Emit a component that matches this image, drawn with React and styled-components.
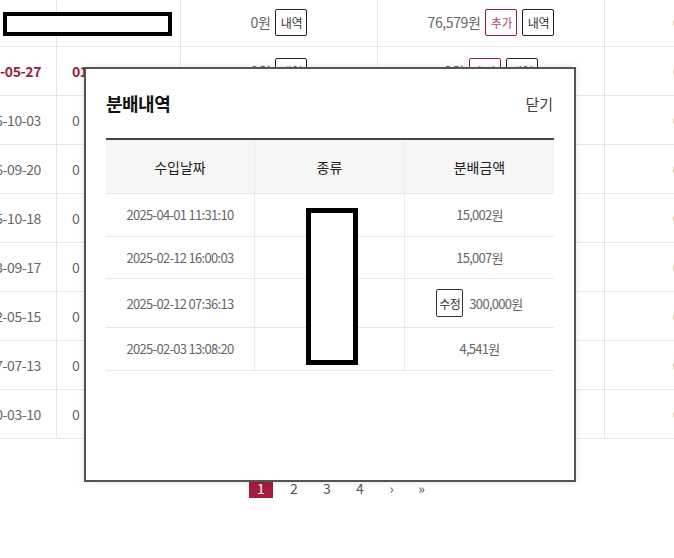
import React from "react";
import styled, { createGlobalStyle } from "styled-components";

const GlobalStyle = createGlobalStyle`
  body {
    margin: 0;
    background: #fff;
    font-family: "Noto Sans CJK KR", "Noto Sans", sans-serif;
  }
`;

const bgRows = [
  { date: "2021-05-27", second: "01", red: true },
  { date: "2015-10-03", second: "0" },
  { date: "2016-09-20", second: "0" },
  { date: "2015-10-18", second: "0" },
  { date: "2013-09-17", second: "0" },
  { date: "2012-05-15", second: "0" },
  { date: "2017-07-13", second: "0" },
  { date: "2020-03-10", second: "0" },
];

const history = [
  { date: "2025-04-01 11:31:10", amount: "15,002원" },
  { date: "2025-02-12 16:00:03", amount: "15,007원" },
  { date: "2025-02-12 07:36:13", amount: "300,000원", edit: true },
  { date: "2025-02-03 13:08:20", amount: "4,541원" },
];

const Page = styled.div`
  position: relative;
  width: 674px;
  height: 558px;
  overflow: hidden;
`;

const BgTable = styled.div`
  margin-left: -44px;
  margin-top: -2px;
  width: 760px;
`;

const BgRow = styled.div`
  display: grid;
  grid-template-columns: 101px 124px 197px 227px 111px;
  height: 49px;
  border-bottom: 1px solid #e6e6e6;
  box-sizing: border-box;
`;

const BgCell = styled.div`
  display: flex;
  align-items: center;
  justify-content: ${(p) => p.$align || "center"};
  gap: 5px;
  padding: ${(p) => p.$pad || "0"};
  border-right: 1px solid #e6e6e6;
  font-size: 14px;
  letter-spacing: -0.4px;
  color: ${(p) => (p.$red ? "#9b1d3d" : "#666")};
  font-weight: ${(p) => (p.$red ? 700 : 400)};
  white-space: nowrap;
  overflow: hidden;
  position: relative;
`;

const SmallBtn = styled.span`
  display: inline-flex;
  align-items: center;
  justify-content: center;
  width: 32px;
  height: 27px;
  box-sizing: border-box;
  border: 1px solid ${(p) => (p.$red ? "#9b1d3d" : "#222")};
  border-radius: 2px;
  font-size: 12px;
  color: ${(p) => (p.$red ? "#b0486a" : "#333")};
  background: #fff;
`;

const Redact = styled.div`
  position: absolute;
  box-sizing: border-box;
  border: ${(p) => p.$w || 5}px solid #000;
  background: #fff;
`;

const Pager = styled.div`
  display: flex;
  justify-content: center;
  margin-top: 39px;
  margin-left: 7px;
`;

const PageItem = styled.span`
  width: ${(p) => (p.$arrow ? "21px" : "24px")};
  height: 20px;
  margin: 0 4.5px;
  display: flex;
  align-items: center;
  justify-content: center;
  font-size: 14px;
  color: ${(p) => (p.$active ? "#fff" : "#555")};
  background: ${(p) => (p.$active ? "#a51c3c" : "transparent")};
`;

const Modal = styled.div`
  position: absolute;
  left: 84px;
  top: 67px;
  width: 492px;
  height: 415px;
  box-sizing: border-box;
  border: 2px solid #555;
  background: #fff;
  box-shadow: 0 0 6px rgba(0, 0, 0, 0.12);
  padding: 21px 20px 0;
`;

const ModalHead = styled.div`
  display: flex;
  justify-content: space-between;
  align-items: center;
  height: 26px;
  margin-bottom: 22px;
`;

const Title = styled.h2`
  margin: 0;
  font-size: 18px;
  font-weight: 700;
  color: #111;
  letter-spacing: -0.5px;
`;

const Close = styled.span`
  font-size: 15px;
  color: #444;
  margin-right: 1px;
`;

const Table = styled.div`
  position: relative;
  border-top: 2px solid #444;
`;

const Row = styled.div`
  display: grid;
  grid-template-columns: 149px 150px 149px;
  box-sizing: border-box;
  border-bottom: 1px solid #e8e8e8;
  background: ${(p) => (p.$head ? "#f6f6f6" : "#fff")};
  min-height: ${(p) => (p.$head ? "54px" : "42.5px")};
`;

const Cell = styled.div`
  display: flex;
  align-items: center;
  justify-content: center;
  gap: 6px;
  padding: ${(p) => (p.$tall ? "10px 0" : "0")};
  border-right: 1px solid #ececec;
  font-size: ${(p) => (p.$head ? "14px" : "13px")};
  color: ${(p) => (p.$head ? "#222" : "#666")};
  letter-spacing: ${(p) => (p.$head ? "0" : "-0.7px")};
  &:last-child {
    border-right: none;
  }
`;

const EditBtn = styled.span`
  display: inline-flex;
  align-items: center;
  justify-content: center;
  width: 27px;
  height: 28px;
  box-sizing: border-box;
  border: 1px solid #333;
  border-radius: 2px;
  font-size: 12px;
  color: #333;
  letter-spacing: -0.5px;
`;

export default function App() {
  return (
    <Page>
      <GlobalStyle />
      <BgTable>
        <BgRow>
          <BgCell $align="flex-end" $pad="0 15px 0 0">-</BgCell>
          <BgCell />
          <BgCell>
            0원 <SmallBtn>내역</SmallBtn>
          </BgCell>
          <BgCell>
            76,579원 <SmallBtn $red>추가</SmallBtn>
            <SmallBtn>내역</SmallBtn>
          </BgCell>
          <BgCell $align="flex-start" $pad="0 0 0 68px">0</BgCell>
        </BgRow>
        {bgRows.map((r) => (
          <BgRow key={r.date}>
            <BgCell $align="flex-end" $pad="0 15px 0 0" $red={r.red}>
              {r.date}
            </BgCell>
            <BgCell $align="flex-start" $pad="0 0 0 15px" $red={r.red}>
              {r.second}
            </BgCell>
            <BgCell>
              0원 <SmallBtn>내역</SmallBtn>
            </BgCell>
            <BgCell>
              0원 <SmallBtn $red>추가</SmallBtn>
              <SmallBtn>내역</SmallBtn>
            </BgCell>
            <BgCell $align="flex-start" $pad="0 0 0 68px">0</BgCell>
          </BgRow>
        ))}
      </BgTable>
      <Redact $w={4} style={{ left: 3, top: 12, width: 169, height: 24 }} />

      <Pager>
        <PageItem $active>1</PageItem>
        <PageItem>2</PageItem>
        <PageItem>3</PageItem>
        <PageItem>4</PageItem>
        <PageItem $arrow>›</PageItem>
        <PageItem $arrow>»</PageItem>
      </Pager>

      <Modal>
        <ModalHead>
          <Title>분배내역</Title>
          <Close>닫기</Close>
        </ModalHead>
        <Table>
          <Row $head>
            <Cell $head>수입날짜</Cell>
            <Cell $head>종류</Cell>
            <Cell $head>분배금액</Cell>
          </Row>
          {history.map((h) => (
            <Row key={h.date}>
              <Cell $tall={h.edit}>{h.date}</Cell>
              <Cell $tall={h.edit}>-</Cell>
              <Cell $tall={h.edit}>
                {h.edit && <EditBtn>수정</EditBtn>}
                {h.amount}
              </Cell>
            </Row>
          ))}
          <Redact $w={5} style={{ left: 200, top: 68, width: 52, height: 157 }} />
        </Table>
      </Modal>
    </Page>
  );
}
